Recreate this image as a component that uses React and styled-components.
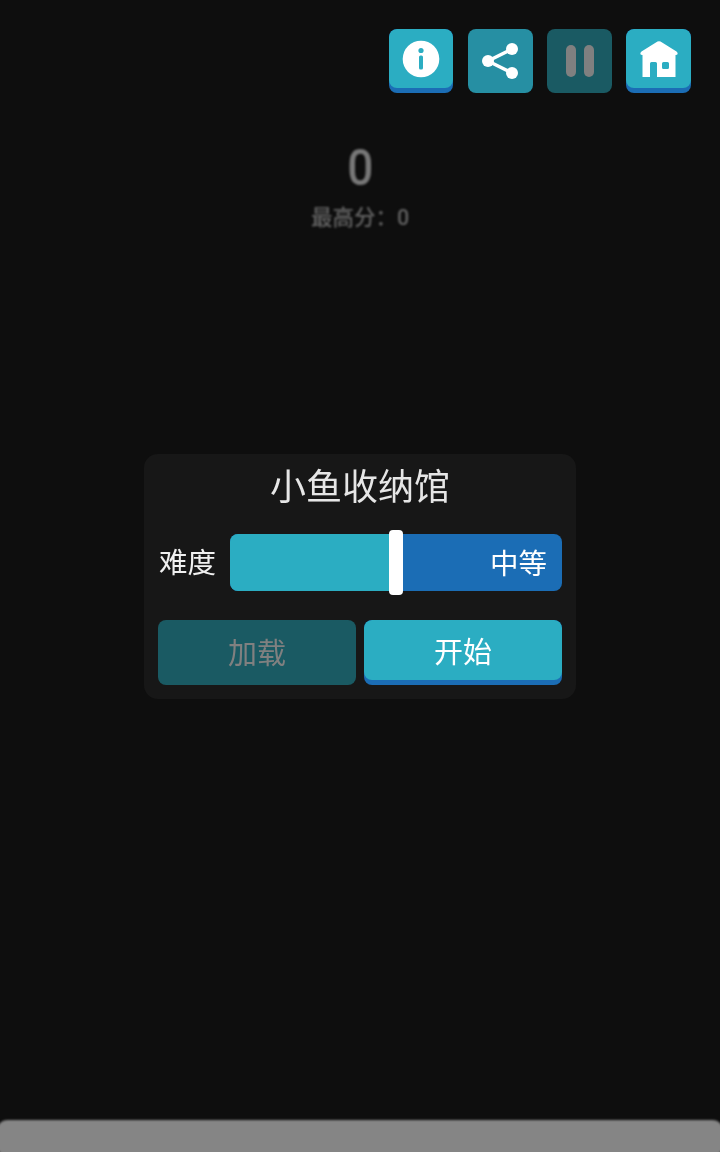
import React from 'react';
import styled, { createGlobalStyle } from 'styled-components';

const GlobalStyle = createGlobalStyle`
  html, body {
    margin: 0;
    padding: 0;
    background: #0e0e0e;
  }
`;

const Page = styled.div`
  width: 720px;
  height: 1152px;
  overflow: hidden;
  display: flex;
  flex-direction: column;
  font-family: Roboto, "Noto Sans CJK SC", sans-serif;
  background: #0e0e0e;
  filter: blur(0.4px);
`;

const Toolbar = styled.div`
  display: flex;
  justify-content: flex-end;
  gap: 14.6px;
  padding: 29px 29px 0 0;
`;

const IconButton = styled.button`
  width: 64.6px;
  height: 64px;
  padding: 0;
  border: 0;
  border-radius: 8px;
  overflow: hidden;
  display: flex;
  flex-direction: column;
  background: ${({ $tone }) => ($tone === 'dim' ? '#268fa3' : $tone === 'off' ? '#1a5a63' : '#1b6db5')};
`;

const IconFace = styled.span`
  width: 100%;
  height: ${({ $raised }) => ($raised ? '59px' : '64px')};
  flex: none;
  display: flex;
  align-items: center;
  justify-content: center;
  border-radius: 8px;
  background: ${({ $raised }) => ($raised ? '#2badc2' : 'transparent')};
`;

const Score = styled.div`
  margin-top: 46px;
  height: 96px;
  display: flex;
  flex-direction: column;
  align-items: center;
  color: #787878;
  filter: blur(1.3px);
`;

const ScoreValue = styled.div`
  font-size: 50px;
  line-height: 58px;
  font-weight: 500;
  transform: scaleX(0.92);
`;

const BestScore = styled.div`
  font-size: 21.5px;
  line-height: 26px;
  margin-top: 8px;
  font-weight: 500;
  color: #626262;
`;

const Panel = styled.div`
  align-self: center;
  margin-top: 219px;
  width: 432px;
  height: 245px;
  box-sizing: border-box;
  padding: 12px 14px 14px;
  border-radius: 14px;
  background: #171717;
  display: flex;
  flex-direction: column;
`;

const Title = styled.div`
  font-size: 36px;
  line-height: 44px;
  text-align: center;
  color: #e6e6e6;
`;

const DifficultyRow = styled.div`
  margin-top: 24px;
  display: flex;
  align-items: center;
  gap: 14px;
`;

const Label = styled.div`
  padding: 2px 0 0 1px;
  font-size: 28.5px;
  line-height: 55px;
  color: #f0f0f0;
`;

const Slider = styled.div`
  position: relative;
  flex: 1;
  height: 57px;
  box-sizing: border-box;
  border-radius: 8px;
  background: #1b6db5;
  display: flex;
  align-items: center;
  justify-content: flex-end;
  padding: 0 15px 2px 0;
  font-size: 28.5px;
  color: #fff;
`;

const SliderFill = styled.div`
  position: absolute;
  left: 0;
  top: 0;
  bottom: 0;
  border-radius: 8px 0 0 8px;
  background: #2badc2;
`;

const SliderThumb = styled.div`
  position: absolute;
  top: -4px;
  bottom: -4px;
  width: 14.6px;
  margin-left: -7.3px;
  border-radius: 4px;
  background: #fff;
`;

const Actions = styled.div`
  margin-top: 29px;
  display: flex;
  gap: 8px;
`;

const ActionButton = styled.button`
  flex: 1;
  height: 65px;
  padding: 0;
  border: 0;
  border-radius: 8px;
  overflow: hidden;
  display: flex;
  flex-direction: column;
  font-family: inherit;
  font-size: 29px;
  color: ${({ $disabled }) => ($disabled ? '#808080' : '#fff')};
  background: ${({ $disabled }) => ($disabled ? '#1a5a63' : '#1b6db5')};
`;

const ActionFace = styled.span`
  width: 100%;
  height: ${({ $disabled }) => ($disabled ? '65px' : '60px')};
  flex: none;
  box-sizing: border-box;
  padding-bottom: ${({ $disabled }) => ($disabled ? '4px' : '0')};
  display: flex;
  align-items: center;
  justify-content: center;
  border-radius: 8px;
  background: ${({ $disabled }) => ($disabled ? 'transparent' : '#2badc2')};
`;

const BottomBar = styled.div`
  margin: auto -3px -4px;
  height: 36px;
  flex: none;
  border-radius: 10px;
  background: #858585;
  filter: blur(1.2px);
`;

const InfoIcon = () => (
  <svg width="38" height="38" viewBox="0 0 38 38">
    <circle cx="19" cy="19" r="18.3" fill="#fff" />
    <circle cx="19" cy="10.5" r="2.6" fill="#2badc2" />
    <rect x="17" y="15.5" width="4" height="14" rx="1.5" fill="#2badc2" />
  </svg>
);

const ShareIcon = () => (
  <svg width="38" height="38" viewBox="0 0 38 38">
    <path d="M31 7 L7 19 L31 31" fill="none" stroke="#fff" strokeWidth="3.4" />
    <circle cx="31" cy="7" r="6" fill="#fff" />
    <circle cx="7" cy="19" r="6" fill="#fff" />
    <circle cx="31" cy="31" r="6" fill="#fff" />
  </svg>
);

const PauseIcon = () => (
  <svg width="30" height="34" viewBox="0 0 30 34">
    <rect x="1" y="1" width="10" height="32" rx="5" fill="#808080" />
    <rect x="19" y="1" width="10" height="32" rx="5" fill="#808080" />
  </svg>
);

const HomeIcon = () => (
  <svg width="38" height="36" viewBox="0 0 38 36">
    <path
      fillRule="evenodd"
      fill="#fff"
      d="M17.5 0.6 Q19 -0.2 20.5 0.6 L36.5 10.5 Q38.5 12.5 37 13.8 L35.5 14 L35.5 36 L17 36 L17 22.5 Q17 21 15.5 21 L11.5 21 Q10 21 10 22.5 L10 36 L2.5 36 L2.5 14 L1 13.8 Q-0.5 12.5 1.5 10.5 Z M23.5 21 Q22 21 22 22.5 L22 26.5 Q22 28 23.5 28 L27.5 28 Q29 28 29 26.5 L29 22.5 Q29 21 27.5 21 Z"
    />
  </svg>
);

const App = () => {
  return (
    <Page>
      <GlobalStyle />
      <Toolbar>
        <IconButton><IconFace $raised><InfoIcon /></IconFace></IconButton>
        <IconButton $tone="dim"><IconFace><ShareIcon /></IconFace></IconButton>
        <IconButton $tone="off"><IconFace><PauseIcon /></IconFace></IconButton>
        <IconButton><IconFace $raised><HomeIcon /></IconFace></IconButton>
      </Toolbar>
      <Score>
        <ScoreValue>0</ScoreValue>
        <BestScore>最高分：0</BestScore>
      </Score>
      <Panel>
        <Title>小鱼收纳馆</Title>
        <DifficultyRow>
          <Label>难度</Label>
          <Slider>
            <SliderFill style={{ width: '50%' }} />
            <SliderThumb style={{ left: '50%' }} />
            中等
          </Slider>
        </DifficultyRow>
        <Actions>
          <ActionButton $disabled><ActionFace $disabled>加载</ActionFace></ActionButton>
          <ActionButton><ActionFace>开始</ActionFace></ActionButton>
        </Actions>
      </Panel>
      <BottomBar />
    </Page>
  );
};

export default App;
